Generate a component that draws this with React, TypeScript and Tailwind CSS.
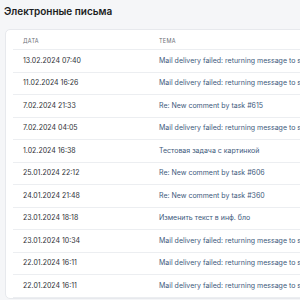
const rows = [
  { date: '13.02.2024 07:40', subject: 'Mail delivery failed: returning message to sender' },
  { date: '11.02.2024 16:26', subject: 'Mail delivery failed: returning message to sender' },
  { date: '7.02.2024 21:33', subject: 'Re: New comment by task #615' },
  { date: '7.02.2024 04:05', subject: 'Mail delivery failed: returning message to sender' },
  { date: '1.02.2024 16:38', subject: 'Тестовая задача с картинкой' },
  { date: '25.01.2024 22:12', subject: 'Re: New comment by task #606' },
  { date: '24.01.2024 21:48', subject: 'Re: New comment by task #360' },
  { date: '23.01.2024 18:18', subject: 'Изменить текст в инф. бло' },
  { date: '23.01.2024 10:34', subject: 'Mail delivery failed: returning message to sender' },
  { date: '22.01.2024 16:11', subject: 'Mail delivery failed: returning message to sender' },
  { date: '22.01.2024 16:11', subject: 'Mail delivery failed: returning message to sender' },
];

export default function App() {
  return (
    <div className="h-[300px] w-[300px] overflow-hidden bg-[#f5f6f8] font-['Inter',sans-serif]">
      <h1 className="pl-[4px] pt-[1px] text-[10px] leading-[20px] font-semibold text-[#1b1d21]">
        Электронные письма
      </h1>
      <div className="ml-[5px] mt-[8px] w-[320px] rounded-[5px] border border-[#e7e9ed] bg-white px-[7px] pt-[4px]">
        <div className="flex h-[16px] items-center border-b border-[#eceef1] text-[5.5px] tracking-[0.3px] uppercase text-[#6b6f76]">
          <div className="w-[146px] shrink-0 pl-[10px]">Дата</div>
          <div>Тема</div>
        </div>
        {rows.map((r, i) => (
          <div
            key={i}
            className="flex h-[22.5px] items-center border-b border-[#eceef1] whitespace-nowrap"
          >
            <div className="w-[146px] shrink-0 pl-[10px] text-[7px] text-[#2e3136]">{r.date}</div>
            <div className="text-[7px] text-[#40597c]">{r.subject}</div>
          </div>
        ))}
      </div>
    </div>
  );
}
